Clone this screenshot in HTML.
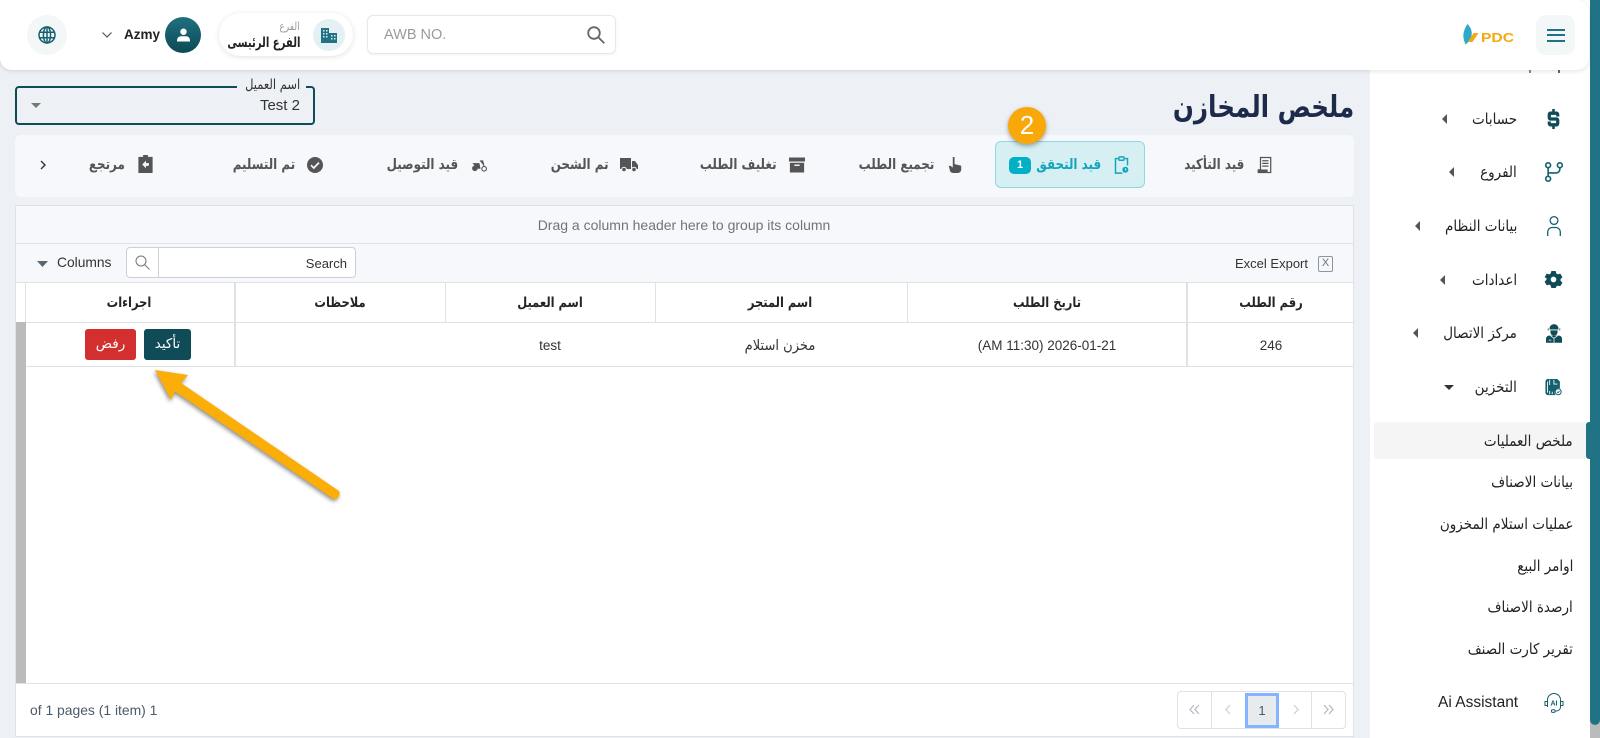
<!DOCTYPE html>
<html dir="ltr"><head><meta charset="utf-8"><title>ملخص المخازن</title>
<style>
*{box-sizing:border-box}
html,body{margin:0;padding:0}
body{width:1600px;height:738px;overflow:hidden;position:relative;background:#edf0f5;font-family:"Liberation Sans","DejaVu Sans",sans-serif;color:#212529}
.a{position:absolute}
.t{position:absolute;white-space:nowrap;line-height:20px;height:20px;margin-top:-10px}
.ar{font-family:"DejaVu Sans",sans-serif;transform-origin:right center;transform:scaleX(.82)}
.c{transform:translateX(-50%)}
.arc{font-family:"DejaVu Sans",sans-serif;transform:translateX(-50%) scaleX(.82)}
.tab{font-size:14.5px;font-weight:700;color:#555}
.side{font-size:15px;color:#222;transform:scaleX(.9)}
.th{font-size:14px;font-weight:700;color:#212529}
.td{font-size:13.5px;color:#333}
.v{position:absolute;background:#dee2e6;width:1px}
svg{position:absolute;overflow:visible}
</style></head><body>

<!-- sidebar -->
<div class="a" style="left:1370px;top:0;width:220px;height:738px;background:#fff"></div>
<div class="a" style="left:1590px;top:0;width:10px;height:738px;background:#bbb"></div>
<div class="a" style="left:1590px;top:0;width:10px;height:725px;background:#207385;border-radius:0 0 5px 5px"></div>
<div class="a" style="left:1374px;top:422px;width:212px;height:37px;background:#f5f5f5;border-radius:3px 0 0 3px"></div>
<div class="a" style="left:1586px;top:422px;width:4px;height:37px;background:#207385;border-radius:3px 0 0 3px"></div>

<div class="t ar side" style="right:83px;top:119px">حسابات</div>
<div class="t ar side" style="right:83px;top:172px">الفروع</div>
<div class="t ar side" style="right:83px;top:226px">بيانات النظام</div>
<div class="t ar side" style="right:83px;top:280px">اعدادات</div>
<div class="t ar side" style="right:83px;top:333px">مركز الاتصال</div>
<div class="t ar side" style="right:83px;top:387px">التخزين</div>
<div class="t ar side" style="right:27px;top:441px">ملخص العمليات</div>
<div class="t ar side" style="right:27px;top:482px">بيانات الاصناف</div>
<div class="t ar side" style="right:27px;top:524px">عمليات استلام المخزون</div>
<div class="t ar side" style="right:27px;top:566px">اوامر البيع</div>
<div class="t ar side" style="right:27px;top:607px">ارصدة الاصناف</div>
<div class="t ar side" style="right:27px;top:649px">تقرير كارت الصنف</div>
<div class="t" style="left:1438px;top:703px;font-size:15.5px;color:#222">Ai Assistant</div>

<!-- side carets -->
<svg style="left:0;top:0" width="1600" height="738" fill="#555">
<path d="M1447 114v10l-5-5z"/><path d="M1454 167v10l-5-5z"/><path d="M1420 221v10l-5-5z"/><path d="M1445 275v10l-5-5z"/><path d="M1418 328v10l-5-5z"/><path d="M1444 385h10l-5 5z" fill="#333"/>
</svg>

<!-- side icons -->
<svg style="left:1547px;top:109px" width="13" height="20" viewBox="0 0 20 24" preserveAspectRatio="none"><path d="M8 0h4v3h3a4 4 0 0 1 4 4v2h-5V7H6v3h9a4 4 0 0 1 4 4v3a4 4 0 0 1-4 4h-3v3H8v-3H5a4 4 0 0 1-4-4v-2h5v2h8v-3H5a4 4 0 0 1-4-4V7a4 4 0 0 1 4-4h3z" fill="#0f4c58"/></svg>
<svg style="left:1545px;top:162px" width="18" height="20" viewBox="0 0 20 22" fill="none" stroke="#14606f" stroke-width="1.800"><circle cx="3.500" cy="3.500" r="2.700"/><circle cx="16.500" cy="3.500" r="2.700"/><circle cx="3.500" cy="18.500" r="2.700"/><path d="M3.500 6.300v9.500M3.500 12h9a4 4 0 0 0 4-4V6.300"/></svg>
<svg style="left:1547px;top:216px" width="14" height="20" viewBox="0 0 14 20" fill="none" stroke="#14606f" stroke-width="1.300"><circle cx="7" cy="4.500" r="3.900"/><path d="M.7 20v-4a4.500 4.500 0 0 1 4.500-4.500h3.600a4.500 4.500 0 0 1 4.500 4.500v4"/></svg>
<svg style="left:1545px;top:271px" width="17" height="17" viewBox="0 0 24 24"><path fill="#0f4c58" fill-rule="evenodd" d="M9 0h6l1 3.600 2 1.100 3.600-1 3 5.200-2.700 2.600v2.300l2.700 2.600-3 5.200-3.600-1-2 1.200L15 24H9l-1-3.600-2-1.200-3.600 1-3-5.200 2.700-2.600v-2.300L-.6 8.900l3-5.200 3.600 1 2-1.100zM12 8a4 4 0 1 0 0 8 4 4 0 0 0 0-8z"/></svg>
<svg style="left:1546px;top:323px" width="16" height="20" viewBox="0 0 18 22"><path fill="#0f4c58" d="M4 6a5 5 0 0 1 10 0v1H4z"/><path fill="#0f4c58" d="M5 8h8v2a4 4 0 0 1-8 0z"/><path fill="none" stroke="#0f4c58" d="M2.500 8v-2M15.500 8V6"/><path fill="#0f4c58" d="M0 17a4 4 0 0 1 4-3h10a4 4 0 0 1 4 3v5H0z"/><path stroke="#fff" stroke-width=".8" fill="none" d="M5 14l4 3 4-3M9 17v5M3 19h3"/></svg>
<svg style="left:1545px;top:379px" width="17" height="17" viewBox="0 0 19 20"><path fill="#14606f" d="M3 0h11l3 3v8a5 5 0 0 0-5 8H3a3 3 0 0 1-3-3V3a3 3 0 0 1 3-3z"/><path stroke="#fff" stroke-width="1" fill="none" d="M5 1v6M10 1v5h4M5 14v4M8 15v3M2.500 3v13"/><circle cx="15" cy="15" r="3.500" fill="none" stroke="#14606f" stroke-width="1.200"/><path d="M13.500 15l1.200 1.200 1.800-2" stroke="#14606f" fill="none"/></svg>
<svg style="left:1544px;top:693px" width="20" height="21" viewBox="0 0 20 21" fill="none" stroke="#14606f" stroke-width="1"><path d="M3.500 7a6.500 6.500 0 0 1 13 0v7a4 4 0 0 1-4 4h-2"/><path d="M3.500 7v7M1 8.500h2.500v4H1zM16.500 8.500H19v4h-2.500z"/><rect x="7.500" y="16.800" width="3.500" height="2.600" rx="1"/><text x="10" y="12.500" font-family="Liberation Sans" font-size="7" font-weight="700" fill="#14606f" stroke="none" text-anchor="middle">AI</text></svg>

<!-- sliver of hidden menu item -->
<div class="a" style="left:1529px;top:70px;width:2px;height:3px;background:#888"></div>
<div class="a" style="left:1558px;top:70px;width:2px;height:3px;background:#666"></div>

<!-- header -->
<div class="a" style="left:0;top:0;width:1589px;height:70px;background:#fff;border-radius:0 12px 12px 12px;box-shadow:0 1px 5px rgba(0,0,0,.12)"></div>
<div class="a" style="left:27px;top:15px;width:40px;height:40px;border-radius:50%;background:#f3f7f8"></div>
<svg style="left:38px;top:26px" width="18" height="18" viewBox="0 0 18 18" fill="none" stroke="#14606f" stroke-width="1.500"><circle cx="9" cy="9" r="8"/><ellipse cx="9" cy="9" rx="3.600" ry="8"/><path d="M1.500 6.300h15M1.500 11.700h15M9 1v16"/></svg>
<svg style="left:102px;top:32px" width="10" height="6" viewBox="0 0 10 6" fill="none" stroke="#555" stroke-width="1.200"><path d="M.5.500L5 5 9.500.5"/></svg>
<div class="t" style="left:124px;top:35px;font-size:13.500px;font-weight:700;color:#222">Azmy</div>
<div class="a" style="left:165px;top:17px;width:36px;height:36px;border-radius:50%;background:linear-gradient(#20707f,#0d4a57)"></div>
<svg style="left:177px;top:28px" width="13" height="14" viewBox="0 0 16 17" fill="#fff"><circle cx="8" cy="4.500" r="4"/><path d="M0 15a5 5 0 0 1 5-5h6a5 5 0 0 1 5 5v1.500H0z"/></svg>

<div class="a" style="left:219px;top:13px;width:134px;height:43px;border-radius:22px;background:#fff;box-shadow:0 1px 6px rgba(0,0,0,.12)"></div>
<div class="a" style="left:313px;top:19px;width:32px;height:32px;border-radius:50%;background:#e4f0f3"></div>
<svg style="left:321px;top:28px" width="16" height="15" viewBox="0 0 16 15"><path fill="#207385" d="M0 0h8v15H0zM8 5h8v10H8z"/><path fill="#e4f0f3" d="M2 2h1.500v1.500H2zM5 2h1.500v1.500H5zM2 5h1.500v1.500H2zM5 5h1.500v1.500H5zM2 8h1.500v1.500H2zM5 8h1.500v1.500H5zM10 7h1.500v1.500H10zM13 7h1.500v1.500H13zM10 10h1.500v1.500H10zM13 10h1.500v1.500H13z"/></svg>
<div class="t ar" style="right:1300px;top:27px;font-size:11px;color:#999">الفرع</div>
<div class="t ar" style="right:1300px;top:43px;font-size:14px;font-weight:700;color:#222;transform:scaleX(.72)">الفرع الرئيسى</div>

<div class="a" style="left:367px;top:15px;width:249px;height:39px;border:1px solid #e8e8e8;border-radius:6px;background:#fff;box-shadow:0 1px 3px rgba(0,0,0,.05)"></div>
<div class="t" style="left:384px;top:35px;font-size:14.500px;color:#9a9a9a">AWB NO.</div>
<svg style="left:587px;top:26px" width="18" height="18" viewBox="0 0 18 18" fill="none" stroke="#666" stroke-width="1.800"><circle cx="7" cy="7" r="5.800"/><path d="M11.500 11.500L17.300 17.300"/></svg>

<svg style="left:1463px;top:24px" width="54" height="22" viewBox="0 0 54 22"><path d="M4.500 0C7.500 3 9 6.500 8.700 10.500 8.400 14 6.500 17.500 2.500 20.500 .8 16.500 0 13 .5 9.500 1 6 2.500 3 4.500 0z" fill="#2fa9c9"/><path d="M10.500 9h5l-6 9H5z" fill="#f5a90f"/><text x="18" y="18" font-family="Liberation Sans" font-size="12.500" font-weight="700" fill="#f5a90f" textLength="33" lengthAdjust="spacingAndGlyphs">PDC</text></svg>
<div class="a" style="left:1536px;top:15px;width:39px;height:40px;border-radius:10px;background:#f3f7f8"></div>
<div class="a" style="left:1547px;top:29px;width:18px;height:2px;background:#207385"></div>
<div class="a" style="left:1547px;top:34px;width:18px;height:2px;background:#207385"></div>
<div class="a" style="left:1547px;top:40px;width:18px;height:2px;background:#207385"></div>

<!-- page title & select -->
<div class="t ar" style="right:246px;top:108px;font-size:30px;font-weight:700;color:#1e2a4a;height:40px;line-height:40px;margin-top:-20px">ملخص المخازن</div>
<div class="a" style="left:15px;top:86px;width:300px;height:39px;border:2px solid #0f4c58;border-radius:4px"></div>
<div class="a" style="left:237px;top:84px;width:69px;height:4px;background:#edf0f5"></div>
<div class="t ar" style="right:1300px;top:85px;font-size:14px;color:#333">اسم العميل</div>
<div class="t" style="right:1300px;top:106px;font-size:15px;color:#333">Test 2</div>
<svg style="left:31px;top:103px" width="10" height="5"><path d="M0 0h10L5 5z" fill="#777"/></svg>

<!-- tabs -->
<div class="a" style="left:15px;top:135px;width:1339px;height:62px;background:#f7f8fb;border-radius:6px"></div>
<div class="a" style="left:995px;top:141px;width:150px;height:47px;background:#d6eff2;border:1px solid #8fd8e3;border-radius:6px"></div>

<div class="t ar tab" style="right:356px;top:165px">قيد التأكيد</div>
<div class="t ar tab" style="right:499px;top:165px;color:#12a5bb">قيد التحقق</div>
<div class="a" style="left:1009px;top:157px;width:22px;height:17px;border-radius:5px;background:#00b0c7;color:#fff;font-size:11px;font-weight:700;text-align:center;line-height:17px">1</div>
<div class="t ar tab" style="right:666px;top:165px">تجميع الطلب</div>
<div class="t ar tab" style="right:823px;top:165px">تغليف الطلب</div>
<div class="t ar tab" style="right:991px;top:165px">تم الشحن</div>
<div class="t ar tab" style="right:1142px;top:165px">قيد التوصيل</div>
<div class="t ar tab" style="right:1305px;top:165px">تم التسليم</div>
<div class="t ar tab" style="right:1475px;top:165px">مرتجع</div>

<svg style="left:1257px;top:157px" width="15" height="16" viewBox="0 0 15 18"><path d="M3 .500h11.500v17H.500v-3H3z" fill="none" stroke="#555" stroke-width="1.400"/><path d="M5 3.500h7v1.400H5zM5 6.500h7v1.400H5zM5 9.500h7v1.400H5z" fill="#555"/><path d="M0 14h11v4H2a2 2 0 0 1-2-2z" fill="#555"/></svg>
<svg style="left:1114px;top:156px" width="15" height="18" viewBox="0 0 16 21" fill="none" stroke="#12a5bb" stroke-width="1.700"><path d="M4 3H1v17h8M12 3h3v8"/><rect x="5" y="1" width="6" height="4" rx="1"/><circle cx="12.500" cy="16" r="3.500" fill="#12a5bb" stroke="none"/><path d="M12.500 14v2.300h1.500" stroke="#d6eff2" stroke-width=".8"/></svg>
<svg style="left:948px;top:157px" width="14" height="16" viewBox="0 0 14 18"><path fill="#555" d="M4.500 0h2v8l6.500 1.500a1 1 0 0 1 1 1V14a4 4 0 0 1-4 4H5a4 4 0 0 1-4-4l-1-4h2l2.500 2z"/></svg>
<svg style="left:789px;top:157px" width="16" height="16" viewBox="0 0 18 17"><path fill="#555" d="M0 0h18v4.500H0zM1 6h16v11H1z"/><path fill="#f7f8fb" d="M6 8h6v1.600H6z"/></svg>
<svg style="left:620px;top:158px" width="18" height="14" viewBox="0 0 18 14"><path fill="#555" d="M0 0h11v11H0zM12 3h3l3 4v4h-6z"/><circle cx="4" cy="11.500" r="2.300" fill="#555" stroke="#f7f8fb"/><circle cx="14" cy="11.500" r="2.300" fill="#555" stroke="#f7f8fb"/></svg>
<svg style="left:471px;top:159px" width="17" height="13" viewBox="0 0 17 14"><circle cx="3.500" cy="10" r="3" fill="#555"/><circle cx="13.500" cy="10.500" r="2.500" fill="none" stroke="#555" stroke-width="1.200"/><path d="M2 5h6l1 5H6zM9 2h3l1.500 6" fill="#555" stroke="#555"/></svg>
<svg style="left:307px;top:157px" width="16" height="16" viewBox="0 0 16 16"><circle cx="8" cy="8" r="8" fill="#555"/><path d="M4 8.200l2.800 2.800L12 5.600" fill="none" stroke="#f7f8fb" stroke-width="1.700"/></svg>
<svg style="left:138px;top:155px" width="15" height="18" viewBox="0 0 15 19"><path fill="#555" d="M5 0h5v2h5v17H0V2h5z"/><path fill="#f7f8fb" d="M4 10l4-4v2.500h3v3H8V14z"/></svg>
<svg style="left:40px;top:160px" width="6" height="10" viewBox="0 0 6 10" fill="none" stroke="#333" stroke-width="1.400"><path d="M1 1l4 4-4 4"/></svg>

<!-- grid -->
<div class="a" style="left:15px;top:205px;width:1339px;height:532px;background:#fff;border:1px solid #dee2e6"></div>
<div class="a" style="left:16px;top:206px;width:1337px;height:77px;background:#f7f8fb"></div>
<div class="a" style="left:16px;top:243px;width:1337px;height:1px;background:#dee2e6"></div>
<div class="a" style="left:16px;top:282px;width:1337px;height:1px;background:#dee2e6"></div>
<div class="a" style="left:16px;top:322px;width:1337px;height:1px;background:#dee2e6"></div>
<div class="a" style="left:16px;top:366px;width:1337px;height:1px;background:#dee2e6"></div>
<div class="a" style="left:16px;top:683px;width:1337px;height:1px;background:#dee2e6"></div>
<div class="a" style="left:16px;top:322px;width:10px;height:361px;background:#bbb"></div>
<div class="v" style="left:25px;top:283px;height:39px"></div>
<div class="v" style="left:234px;top:283px;height:84px;width:2px"></div>
<div class="v" style="left:445px;top:283px;height:39px"></div>
<div class="v" style="left:655px;top:283px;height:39px"></div>
<div class="v" style="left:907px;top:283px;height:39px"></div>
<div class="v" style="left:1186px;top:283px;height:84px;width:2px"></div>

<div class="t c" style="left:684px;top:225px;font-size:14px;color:#6c757d">Drag a column header here to group its column</div>
<svg style="left:37px;top:261px" width="11" height="6"><path d="M0 0h11L5.500 6z" fill="#5a6672"/></svg>
<div class="t" style="left:57px;top:263px;font-size:13.800px;color:#333">Columns</div>
<div class="a" style="left:126px;top:247px;width:230px;height:31px;background:#fff;border:1px solid #ccd0d5;border-radius:4px"></div>
<div class="v" style="left:158px;top:248px;height:29px;background:#ccd0d5"></div>
<svg style="left:135px;top:255px" width="15" height="15" viewBox="0 0 15 15" fill="none" stroke="#777" stroke-width="1"><circle cx="6" cy="6" r="5"/><path d="M9.500 9.500l5 5"/></svg>
<div class="t" style="right:1253px;top:264px;font-size:13px;color:#333">Search</div>
<div class="t" style="right:292px;top:264px;font-size:13px;color:#333">Excel Export</div>
<div class="a" style="left:1318px;top:256px;width:15px;height:16px;border:1.500px solid #8b96a3;border-radius:2px;color:#6a7480;font-size:11px;line-height:13px;text-align:center">X</div>

<div class="t arc th" style="left:129px;top:303px">اجراءات</div>
<div class="t arc th" style="left:340px;top:303px">ملاحظات</div>
<div class="t arc th" style="left:550px;top:303px">اسم العميل</div>
<div class="t arc th" style="left:780px;top:303px">اسم المتجر</div>
<div class="t arc th" style="left:1047px;top:303px">تاريخ الطلب</div>
<div class="t arc th" style="left:1271px;top:303px">رقم الطلب</div>

<div class="a" style="left:144px;top:329px;width:47px;height:31px;background:#0f4c58;border-radius:3px;color:#fff;font-family:'DejaVu Sans',sans-serif;font-size:13.500px;line-height:30px;text-align:center">تأكيد</div>
<div class="a" style="left:85px;top:329px;width:51px;height:31px;background:#d32f2f;border-radius:3px;color:#fff;font-family:'DejaVu Sans',sans-serif;font-size:13.500px;line-height:30px;text-align:center">رفض</div>
<div class="t c td" style="left:550px;top:346px">test</div>
<div class="t td" style="left:780px;top:346px;font-family:'DejaVu Sans',sans-serif;font-size:14.500px;transform:translateX(-50%) scaleX(.9)">مخزن استلام</div>
<div class="t c td" style="left:1047px;top:346px">(AM 11:30) 2026-01-21</div>
<div class="t c td" style="left:1271px;top:346px">246</div>

<div class="t" style="left:30px;top:710px;font-size:13.900px;color:#495a6b">of 1 pages (1 item) 1</div>
<div class="a" style="left:1177px;top:691px;width:169px;height:38px;border:1px solid #dee2e6;border-radius:4px"></div>
<div class="v" style="left:1211px;top:692px;height:36px"></div>
<div class="v" style="left:1311px;top:692px;height:36px"></div>
<div class="a" style="left:1245px;top:693px;width:34px;height:35px;background:#e8ebee;border:3px solid #85b3ff;text-align:center;font-size:13px;line-height:29px;color:#495a6b">1</div>
<svg style="left:1190px;top:704px" width="144" height="12" fill="none" stroke="#b4bcc6" stroke-width="1.300"><path d="M4 1L0 5.500 4 10M9 1L5 5.500 9 10"/><path d="M40 1l-4 4.500 4 4.500" stroke="#ccd2d8"/><path d="M104 1l4 4.500-4 4.500" stroke="#ccd2d8"/><path d="M134 1l4 4.500-4 4.500M139 1l4 4.500-4 4.500"/></svg>

<!-- arrow -->
<svg style="left:0;top:0;filter:drop-shadow(-1px 2px 2px rgba(0,0,0,.45))" width="1600" height="738">
<path d="M155 370L188 375L181 383L339 491A5.500 5.500 0 0 1 333.500 499L175 391.500L171 400Z" fill="#fbad08"/>
</svg>

<!-- callout -->
<div class="a" style="left:1008px;top:107px;width:38px;height:37px;border-radius:50%;background:#f9a80a;box-shadow:0 2px 5px rgba(0,0,0,.35);color:#fff;font-size:26px;line-height:37px;text-align:center">2</div>
</body></html>
